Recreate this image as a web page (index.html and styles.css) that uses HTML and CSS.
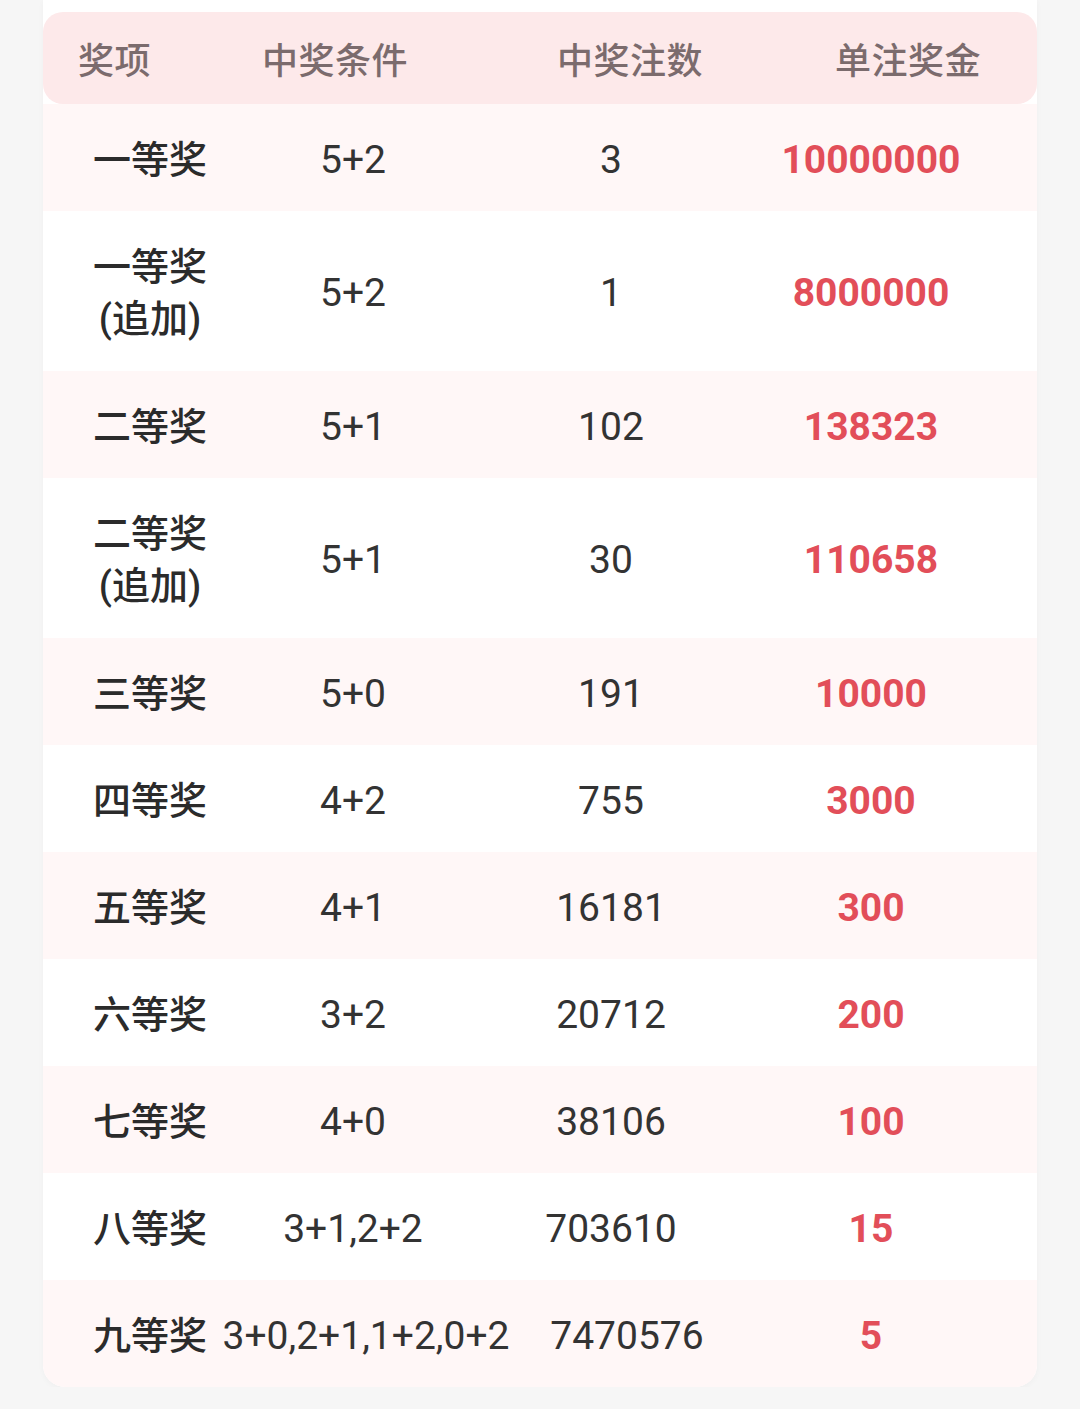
FILE: index.html
```html
<!DOCTYPE html>
<html lang="zh-CN">
<head>
<meta charset="utf-8">
<title>奖项</title>
<link rel="stylesheet" href="styles.css">
</head>
<body>
<div class="card">
  <div class="head">
    <div>奖项</div>
    <div>中奖条件</div>
    <div>中奖注数</div>
    <div>单注奖金</div>
  </div>
  <div class="row pink">
    <div class="c name">一等奖</div><div class="c">5+2</div><div class="c">3</div><div class="c money">10000000</div>
  </div>
  <div class="row tall">
    <div class="c name"><span>一等奖<br>(追加)</span></div><div class="c">5+2</div><div class="c">1</div><div class="c money">8000000</div>
  </div>
  <div class="row pink">
    <div class="c name">二等奖</div><div class="c">5+1</div><div class="c">102</div><div class="c money">138323</div>
  </div>
  <div class="row tall">
    <div class="c name"><span>二等奖<br>(追加)</span></div><div class="c">5+1</div><div class="c">30</div><div class="c money">110658</div>
  </div>
  <div class="row pink">
    <div class="c name">三等奖</div><div class="c">5+0</div><div class="c">191</div><div class="c money">10000</div>
  </div>
  <div class="row">
    <div class="c name">四等奖</div><div class="c">4+2</div><div class="c">755</div><div class="c money">3000</div>
  </div>
  <div class="row pink">
    <div class="c name">五等奖</div><div class="c">4+1</div><div class="c">16181</div><div class="c money">300</div>
  </div>
  <div class="row">
    <div class="c name">六等奖</div><div class="c">3+2</div><div class="c">20712</div><div class="c money">200</div>
  </div>
  <div class="row pink">
    <div class="c name">七等奖</div><div class="c">4+0</div><div class="c">38106</div><div class="c money">100</div>
  </div>
  <div class="row">
    <div class="c name">八等奖</div><div class="c">3+1,2+2</div><div class="c">703610</div><div class="c money">15</div>
  </div>
  <div class="row pink wide last">
    <div class="c name">九等奖</div><div class="c">3+0,2+1,1+2,0+2</div><div class="c">7470576</div><div class="c money">5</div>
  </div>
</div>
</body>
</html>
```
FILE: styles.css
```css
html, body {
  margin: 0;
  padding: 0;
  background: #f6f6f6;
}
body {
  font-family: Roboto, "Noto Sans CJK SC", sans-serif;
  color: #333333;
}
.card {
  margin-left: 43px;
  width: 994px;
  background: #ffffff;
  padding-top: 12px;
  border-radius: 0 0 22px 22px;
  box-shadow: 0 2px 6px rgba(0, 0, 0, 0.03);
}
.head {
  height: 92px;
  background: #fde9ea;
  border-radius: 20px;
  display: grid;
  grid-template-columns: 184px 295px 278px 1fr;
  padding-left: 35px;
  align-items: center;
  font-family: "Noto Sans CJK SC", sans-serif;
  font-size: 36px;
  font-weight: 500;
  color: #7b6b6d;
  letter-spacing: 0.5px;
}
.row {
  box-sizing: border-box;
  height: 107px;
  padding-top: 4px;
  display: grid;
  grid-template-columns: 214px 192px 324px 196px;
  font-size: 39px;
}
.row.tall {
  height: 160px;
}
.row.pink {
  background: #fff7f7;
}
.row.wide {
  grid-template-columns: 214px 218px 304px 184px;
}
.row.last {
  border-radius: 0 0 22px 22px;
}
.c {
  display: flex;
  align-items: center;
  justify-content: center;
  white-space: nowrap;
  min-width: 0;
}
.name {
  font-family: Roboto, "Noto Sans CJK SC", sans-serif;
  font-size: 38px;
  font-weight: 500;
  color: #2b2b2b;
  line-height: 52px;
  text-align: center;
}
.name span {
  display: block;
}
.money {
  font-weight: 700;
  font-size: 39px;
  color: #e24e59;
}
```
